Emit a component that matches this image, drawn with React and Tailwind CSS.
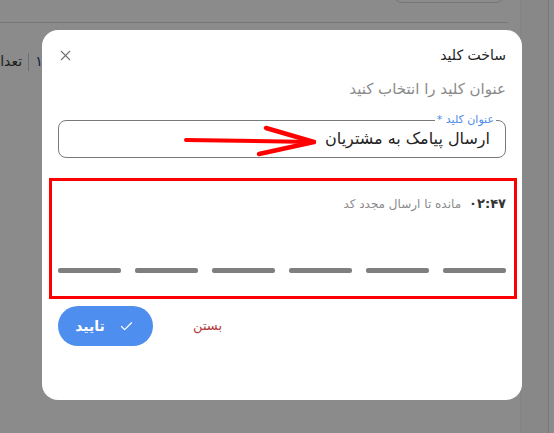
import React from 'react'
import { X, Check } from 'lucide-react'

const font = { fontFamily: '"DejaVu Sans", "Noto Sans", sans-serif' }

function OtpDashes() {
    return (
        <div className="flex gap-[14px]" dir="ltr">
            {[0, 1, 2, 3, 4, 5].map((i) => (
                <div key={i} className="h-[5px] flex-1 rounded-[2px] bg-[#7f7f7f]" />
            ))}
        </div>
    )
}

export default function App() {
    return (
        <div className="relative w-[554px] h-[433px] overflow-hidden bg-[#8b8b8b]" style={font}>
            {/* dimmed page behind */}
            <div className="flex h-full">
                <div className="w-[521px] h-full border-r border-[#838383] flex flex-col">
                    <div className="h-[23px] w-[508px] border-b border-[#777] relative">
                        <div className="absolute right-[3px] top-[-20px] w-[112px] h-[23px] rounded-[9px] border border-[#777]" />
                    </div>
                    <div className="flex items-center gap-[6px] ml-[-6px] mt-[28px] text-[14px] text-[#1e1e1e]" dir="ltr">
                        <span>تعداد</span>
                        <span className="h-[18px] w-px bg-[#6f6f6f]" />
                        <span className="text-[#0b1a4a]">۱</span>
                    </div>
                </div>
                <div className="w-[28px] h-full bg-[#888] border-r border-[#7a7a7a]" />
            </div>

            {/* modal */}
            <div className="absolute left-[42px] top-[30px] w-[480px] h-[370px] bg-white rounded-[16px] px-4" dir="rtl">
                <div className="flex items-center justify-between pt-[13px] h-[37px]">
                    <span className="text-[14px] text-[#222]">ساخت کلید</span>
                    <X size={17} strokeWidth={1.5} className="text-[#6f6f6f] ml-[-1px]" />
                </div>
                <div className="mt-[12px] text-[15px] text-[#8a8a8a] leading-[20px]">عنوان کلید را انتخاب کنید</div>

                <div className="relative mt-[21px] h-[38px] rounded-[8px] border border-[#7a7a7a] flex items-center pr-[15px]">
                    <span className="absolute right-[9px] top-[-9px] bg-white px-[2px] text-[11px] leading-[16px] text-[#4a8be8]">عنوان کلید *</span>
                    <span className="text-[16px] text-[#222]">ارسال پیامک به مشتریان</span>
                    <svg className="absolute left-[125px] top-[4px]" width="136" height="32" viewBox="0 0 136 32">
                        <path d="M2 15 L130 17" stroke="#ff0000" strokeWidth="4" strokeLinecap="round" fill="none" />
                        <path d="M82 3 L130 17 L75 29" stroke="#ff0000" strokeWidth="4.5" strokeLinecap="round" strokeLinejoin="round" fill="none" />
                    </svg>
                </div>

                <div className="mt-[20px] ml-[-9px] mr-[-11px] h-[121px] border-[3px] border-[#ff0000] pl-[6px] pr-[8px] pt-[13px]">
                    <div className="flex items-center gap-[8px] h-[20px]">
                        <span className="text-[13px] font-bold text-[#333]">۰۲:۴۷</span>
                        <span className="text-[12px] text-[#8a8a8a]">مانده تا ارسال مجدد کد</span>
                    </div>
                    <div className="mt-[54px]">
                        <OtpDashes />
                    </div>
                </div>

                <div className="flex items-center justify-end gap-[40px] mt-[7px]">
                    <span className="text-[13px] text-[#b23b3b]">بستن</span>
                    <button className="h-[40px] w-[95px] rounded-full bg-[#4e8eef] text-white flex items-center justify-center gap-[14px] pr-[2px]">
                        <Check size={15} strokeWidth={2} />
                        <span className="text-[14px] font-bold">تایید</span>
                    </button>
                </div>
            </div>
        </div>
    )
}
